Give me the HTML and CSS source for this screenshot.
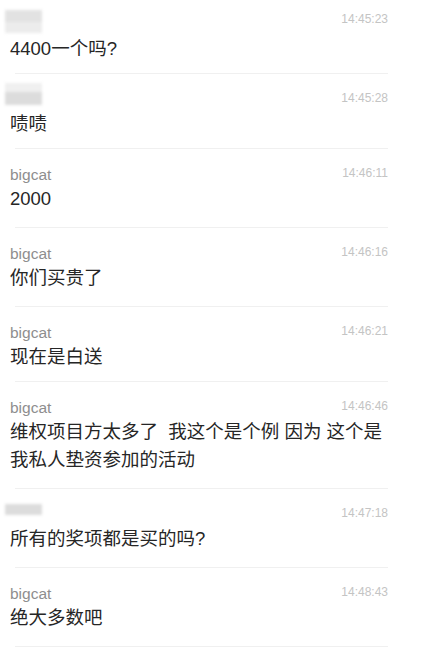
FILE: index.html
```html
<!DOCTYPE html>
<html lang="zh-CN">
<head>
<meta charset="utf-8">
<title>聊天记录</title>
<link rel="stylesheet" href="styles.css">
</head>
<body>
<div class="chat">
  <div class="msg msg--first msg--short">
    <div class="head"><span class="name"><span class="redact redact--a"></span></span><span class="time">14:45:23</span></div>
    <p class="text">4400一个吗?</p>
  </div>
  <div class="msg msg--short">
    <div class="head"><span class="name"><span class="redact redact--b"></span></span><span class="time">14:45:28</span></div>
    <p class="text">啧啧</p>
  </div>
  <div class="msg">
    <div class="head"><span class="name">bigcat</span><span class="time">14:46:11</span></div>
    <p class="text">2000</p>
  </div>
  <div class="msg">
    <div class="head"><span class="name">bigcat</span><span class="time">14:46:16</span></div>
    <p class="text">你们买贵了</p>
  </div>
  <div class="msg msg--short">
    <div class="head"><span class="name">bigcat</span><span class="time">14:46:21</span></div>
    <p class="text">现在是白送</p>
  </div>
  <div class="msg">
    <div class="head"><span class="name">bigcat</span><span class="time">14:46:46</span></div>
    <p class="text">维权项目方太多了  我这个是个例 因为 这个是我私人垫资参加的活动</p>
  </div>
  <div class="msg">
    <div class="head"><span class="name"><span class="redact redact--c"></span></span><span class="time">14:47:18</span></div>
    <p class="text">所有的奖项都是买的吗?</p>
  </div>
  <div class="msg">
    <div class="head"><span class="name">bigcat</span><span class="time">14:48:43</span></div>
    <p class="text">绝大多数吧</p>
  </div>
</div>
</body>
</html>
```

FILE: styles.css
```css
html, body {
  margin: 0;
  padding: 0;
  background: #ffffff;
}

body {
  font-family: "Liberation Sans", "Noto Sans CJK SC", sans-serif;
  overflow: hidden;
}

.chat {
  width: 426px;
}

.msg {
  padding: 17px 38px 0 10px;
}

.msg::after {
  content: "";
  display: block;
  height: 1px;
  margin: 14px 0 0 5px;
  background: #f0f0f0;
}

.msg--short::after {
  margin-top: 10px;
}

.msg--first {
  padding-top: 11px;
}

.head {
  display: flex;
  justify-content: space-between;
  align-items: flex-start;
  height: 18px;
}

.msg--first .head {
  height: 23px;
}

.name {
  position: relative;
  min-width: 37px;
  font-size: 15.5px;
  line-height: 18px;
  color: #8e8e8e;
}

.time {
  font-size: 12px;
  line-height: 14px;
  color: #c4c4c4;
}

.msg--first .time {
  margin-top: 1px;
}

.text {
  margin: 1px 0 0;
  font-size: 18.5px;
  line-height: 28px;
  color: #262626;
  white-space: pre-wrap;
}

.redact {
  position: absolute;
  left: -5px;
  width: 37px;
  filter: blur(1.5px);
}

.redact--a {
  top: -1px;
  height: 23px;
  background: linear-gradient(to bottom, #e2e2e2 0, #e2e2e2 12px, #ececec 12px, #ececec 23px);
}

.redact--b {
  top: -8px;
  height: 22px;
  background: linear-gradient(to bottom, #f0f0f0 0, #f0f0f0 9px, #dcdcdc 9px, #dcdcdc 22px);
}

.redact--c {
  top: -2px;
  height: 11px;
  background: #dcdcdc;
}
```
